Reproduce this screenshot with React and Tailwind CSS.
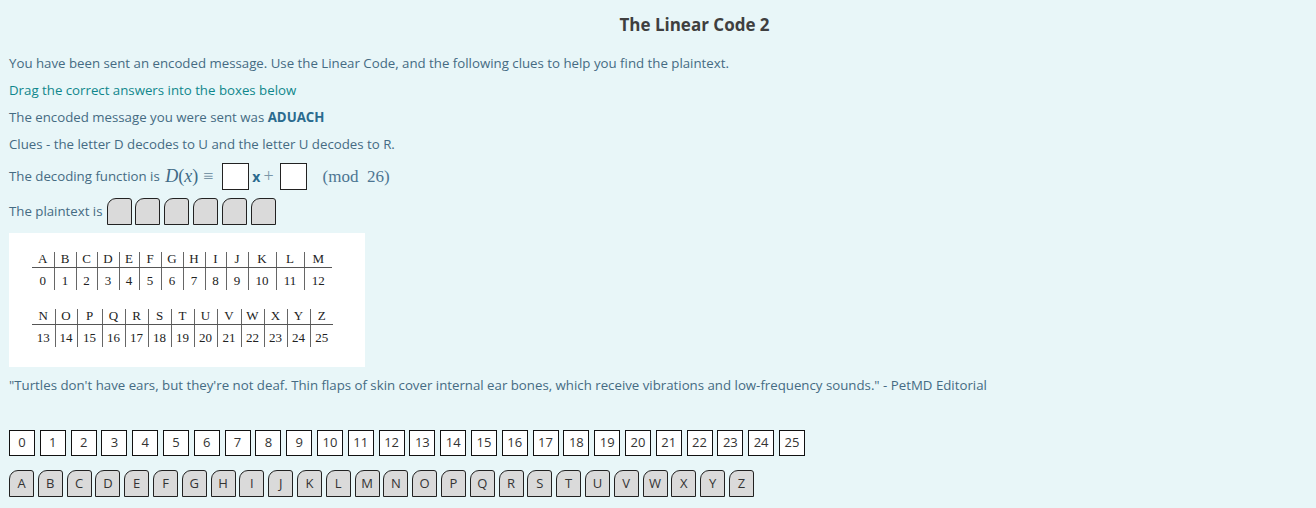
// App.jsx — "The Linear Code 2" drag-and-drop exercise page

const row1 = [
  ['A', 0, 22], ['B', 1, 22], ['C', 2, 21], ['D', 3, 22], ['E', 4, 20], ['F', 5, 22], ['G', 6, 22],
  ['H', 7, 22], ['I', 8, 21], ['J', 9, 22], ['K', 10, 28], ['L', 11, 28], ['M', 12, 28],
];
const row2 = [
  ['N', 13, 23], ['O', 14, 22], ['P', 15, 25], ['Q', 16, 23], ['R', 17, 23], ['S', 18, 23], ['T', 19, 23],
  ['U', 20, 23], ['V', 21, 24], ['W', 22, 23], ['X', 23, 23], ['Y', 24, 23], ['Z', 25, 23],
];

const letters = 'ABCDEFGHIJKLMNOPQRSTUVWXYZ'.split('');

const serif = { fontFamily: '"Liberation Serif", serif' };

function Slot() {
  return (
    <span className="inline-block w-[25px] h-[27px] bg-[#dadada] border-[1.5px] border-[#222] rounded-tl-[9px] rounded-tr-[3px]" />
  );
}

function CodeRow({ cells }) {
  return (
    <table className="border-collapse" style={serif}>
      <tbody>
        <tr>
          {cells.map(([l, n, w], i) => (
            <td
              key={l}
              style={{ width: w }}
              className={`h-[13px] text-center text-[13px] leading-[13px] pb-[2px] border-b border-[#555] ${i > 0 ? 'border-l border-l-[#666]' : ''}`}
            >
              {l}
            </td>
          ))}
        </tr>
        <tr>
          {cells.map(([l, n, w], i) => (
            <td
              key={l}
              className={`text-center text-[13px] leading-[14px] pt-[6px] pb-[2px] ${i > 0 ? 'border-l border-[#666]' : ''}`}
            >
              {n}
            </td>
          ))}
        </tr>
      </tbody>
    </table>
  );
}

export default function App() {
  return (
    <div
      className="min-h-[508px] bg-[#e8f6f8] text-[#456b83] text-[13.25px] pl-[9px]"
      style={{ fontFamily: '"Open Sans", sans-serif' }}
    >
      {/* Title */}
      <div className="pt-[14px] h-[50px] text-center pl-[64px]">
        <h1 className="text-[17px] font-bold text-[#3f3f3f] leading-[22px]">The Linear Code 2</h1>
      </div>

      {/* Instructions */}
      <p className="leading-[27px] h-[27px]">
        You have been sent an encoded message. Use the Linear Code, and the following clues to help you find the plaintext.
      </p>
      <p className="leading-[27px] h-[27px] text-[#0f878c]">Drag the correct answers into the boxes below</p>
      <p className="leading-[27px] h-[27px]">
        The encoded message you were sent was <b className="text-[#2b6b8f] font-bold">ADUACH</b>
      </p>
      <p className="leading-[27px] h-[27px]">Clues - the letter D decodes to U and the letter U decodes to R.</p>

      {/* Decoding function */}
      <div className="flex items-center h-[31px] mt-[3px]">
        <span>The decoding function is&nbsp;</span>
        <span className="text-[18px] text-[#3f6a86] ml-[2px]" style={serif}>
          <i>D</i>(<i>x</i>)
        </span>
        <span className="text-[18px] text-[#7b97a8] ml-[5px] mr-[9px]" style={serif}>≡</span>
        <span className="inline-block w-[27px] h-[27px] bg-white border border-[#222]" />
        <span className="font-bold text-[14px] text-[#2b6b8f] ml-[3px]">x</span>
        <span className="text-[18px] text-[#7b97a8] ml-[3px] mr-[6px]" style={serif}>+</span>
        <span className="inline-block w-[27px] h-[27px] bg-white border border-[#222]" />
        <span className="ml-[16px] text-[17px] text-[#4c7592]" style={serif}>
          (mod&nbsp;&nbsp;26)
        </span>
      </div>

      {/* Plaintext */}
      <div className="flex items-center h-[29px] mt-[5px]">
        <span className="mr-[4px]">The plaintext is</span>
        <div className="flex gap-[3.8px]">
          {Array.from({ length: 6 }).map((_, i) => (
            <Slot key={i} />
          ))}
        </div>
      </div>

      {/* Code table image */}
      <div className="mt-[7px] w-[356px] h-[134px] bg-white text-[#222] pl-[23px] pt-[19px]">
        <CodeRow cells={row1} />
        <div className="h-[19px]" />
        <CodeRow cells={row2} />
      </div>

      {/* Quote */}
      <p className="leading-[36px] h-[36px]">
        "Turtles don't have ears, but they're not deaf. Thin flaps of skin cover internal ear bones, which receive vibrations and low-frequency sounds." - PetMD Editorial
      </p>

      {/* Number tiles */}
      <div className="flex gap-[4.8px] mt-[27px]">
        {Array.from({ length: 26 }).map((_, i) => (
          <span
            key={i}
            className="w-[26px] h-[26px] bg-white border border-[#111] flex items-center justify-center text-[#333] text-[13px]"
          >
            {i}
          </span>
        ))}
      </div>

      {/* Letter tiles */}
      <div className="flex gap-[3.8px] mt-[14px]">
        {letters.map((l) => (
          <span
            key={l}
            className="w-[25px] h-[27px] bg-[#dadada] border-[1.5px] border-[#222] rounded-tl-[9px] rounded-tr-[3px] flex items-center justify-center text-[#333] text-[13px] pt-[1px]"
          >
            {l}
          </span>
        ))}
      </div>
    </div>
  );
}
